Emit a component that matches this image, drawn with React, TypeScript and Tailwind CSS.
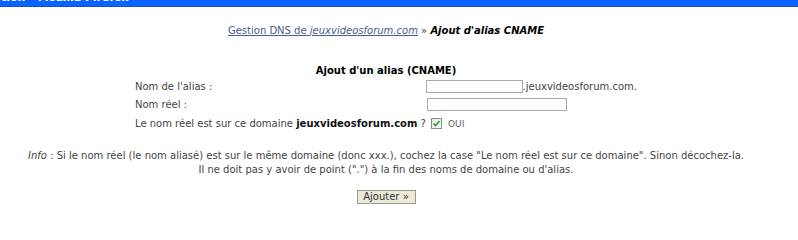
import React from "react";

const font = "font-['DejaVu_Sans',Verdana,sans-serif]";

function TitleBar() {
  return (
    <div className="h-[7px] overflow-hidden bg-[#0a62ff] border-b border-[#1b4fc4]">
      <div className="mt-[-9px] pl-[1px] text-[11px] leading-[13px] font-bold text-white font-['DejaVu_Sans',sans-serif] whitespace-nowrap">
        tion - Mozilla Firefox
      </div>
    </div>
  );
}

function CheckBox() {
  return (
    <span className="ml-[4px] inline-flex items-center justify-center w-[11px] h-[11px] border border-[#7f8c9c] bg-gradient-to-br from-[#e6e6e0] to-white">
      <svg width="9" height="9" viewBox="0 0 9 9">
        <path d="M1.5 4.5 L3.5 6.5 L7.5 2" stroke="#21a121" strokeWidth="1.6" fill="none" />
      </svg>
    </span>
  );
}

export default function App() {
  return (
    <div className={`w-[798px] h-[229px] bg-white overflow-hidden ${font}`}>
      <TitleBar />
      <div className="w-[772px] text-[10px] text-[#444]">
        {/* fil d'ariane */}
        <div className="mt-[17px] leading-[13px] text-center">
          <a className="text-[#4a5a8c] underline">
            Gestion DNS de <i>jeuxvideosforum.com</i>
          </a>{" "}
          » <b className="italic text-black">Ajout d'alias CNAME</b>
        </div>

        <div className="mt-[27px] leading-[13px] text-center font-bold text-black">
          Ajout d'un alias (CNAME)
        </div>

        {/* formulaire */}
        <div className="mx-auto w-[502px]">
          <div className="flex items-center h-[18px]">
            <span className="w-[292px]">Nom de l'alias :</span>
            <span className="w-[97px] h-[13px] border border-[#a5acb2] bg-white" />
            <span>.jeuxvideosforum.com.</span>
          </div>
          <div className="flex items-center h-[18px]">
            <span className="w-[292px]">Nom réel :</span>
            <span className="w-[140px] h-[13px] border border-[#a5acb2] bg-white" />
          </div>
          <div className="flex items-center h-[20px]">
            <span className="w-[292px] whitespace-nowrap">
              Le nom réel est sur ce domaine <b className="text-[#111]">jeuxvideosforum.com</b> ?
            </span>
            <CheckBox />
            <span className="ml-[6px] mt-[3px] text-[9px] text-[#666]">OUI</span>
          </div>
        </div>

        {/* info */}
        <div className="mt-[16px] leading-[14px] text-center">
          <i>Info</i> : Si le nom réel (le nom aliasé) est sur le même domaine (donc xxx.), cochez la case "Le nom réel est sur ce domaine". Sinon décochez-la.
          <br />
          Il ne doit pas y avoir de point (".") à la fin des noms de domaine ou d'alias.
        </div>

        <div className="mt-[13px] flex justify-center">
          <button className="w-[59px] h-[14px] leading-[12px] text-[10px] text-[#333] bg-[#ece9d8] border border-[#9c9a8c]">
            Ajouter »
          </button>
        </div>
      </div>
    </div>
  );
}
